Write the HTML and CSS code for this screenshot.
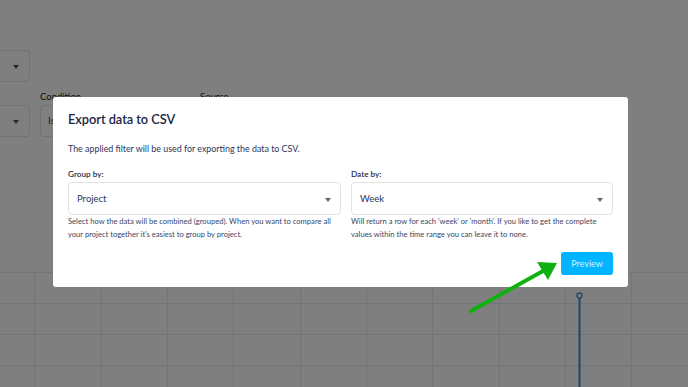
FILE: index.html
```html
<!DOCTYPE html>
<html lang="en">
<head>
    <meta charset="UTF-8">
    <title>Export data to CSV</title>
    <link rel="stylesheet" href="styles.css">
</head>
<body>

<div class="page">
    <div class="filters">
        <div class="filter-row">
            <div class="select small"><span class="caret"></span></div>
        </div>
        <div class="filter-row second">
            <div class="select small"><span class="caret"></span></div>
            <div class="field">
                <label>Condition</label>
                <div class="select cond"><span class="value">Is</span></div>
            </div>
            <div class="field">
                <label>Source</label>
                <div class="select cond"></div>
            </div>
        </div>
    </div>
    <svg class="chart" width="688" height="115" viewBox="0 0 688 115">
        <g stroke="#e8e8e8" stroke-width="1">
            <line x1="0" y1="0.5" x2="688" y2="0.5"/>
            <line x1="0" y1="31.5" x2="688" y2="31.5"/>
            <line x1="0" y1="62.5" x2="688" y2="62.5"/>
            <line x1="0" y1="93.5" x2="688" y2="93.5"/>
            <line x1="34.5" y1="0" x2="34.5" y2="115"/>
            <line x1="101.5" y1="0" x2="101.5" y2="115"/>
            <line x1="167.5" y1="0" x2="167.5" y2="115"/>
            <line x1="233.5" y1="0" x2="233.5" y2="115"/>
            <line x1="300.5" y1="0" x2="300.5" y2="115"/>
            <line x1="366.5" y1="0" x2="366.5" y2="115"/>
            <line x1="432.5" y1="0" x2="432.5" y2="115"/>
            <line x1="499.5" y1="0" x2="499.5" y2="115"/>
            <line x1="565.5" y1="0" x2="565.5" y2="115"/>
            <line x1="631.5" y1="0" x2="631.5" y2="115"/>
        </g>
        <line x1="579.5" y1="26" x2="579.5" y2="115" stroke="#3a8fd0" stroke-width="2"/>
        <circle cx="579.5" cy="23.5" r="2.5" fill="none" stroke="#3a8fd0" stroke-width="1.3"/>
    </svg>
</div>

<div class="overlay">
    <div class="modal">
        <h2 class="modal-title">Export data to CSV</h2>
        <p class="intro">The applied filter will be used for exporting the data to CSV.</p>
        <div class="columns">
            <div class="column">
                <label class="label">Group by:</label>
                <div class="dropdown">Project<span class="caret"></span></div>
                <p class="help">Select how the data will be combined (grouped). When you want to compare all your project together it's easiest to group by project.</p>
            </div>
            <div class="column">
                <label class="label">Date by:</label>
                <div class="dropdown">Week<span class="caret"></span></div>
                <p class="help">Will return a row for each 'week' or 'month'. If you like to get the complete values within the time range you can leave it to none.</p>
            </div>
        </div>
        <div class="actions">
            <button class="preview">Preview</button>
        </div>
    </div>
</div>

<svg class="pointer" width="688" height="387" viewBox="0 0 688 387">
    <line x1="471" y1="311" x2="543" y2="271" stroke="#0fb10f" stroke-width="4" stroke-linecap="round"/>
    <polygon points="557,263 537,262 548,280" fill="#0fb10f"/>
</svg>

</body>
</html>
```

FILE: styles.css
```css
body {
    margin: 0;
    font-family: Lato, "Open Sans", sans-serif;
    background: #fff;
    overflow: hidden;
}
.page {
    width: 688px;
    height: 387px;
}
.filters {
    padding-top: 50px;
    height: 222px;
    box-sizing: border-box;
}
.filter-row {
    display: flex;
    align-items: flex-end;
    gap: 10px;
}
.filter-row.second {
    margin-top: 9px;
}
.select {
    position: relative;
    height: 32px;
    border: 1px solid #e4e4e4;
    border-radius: 4px;
    box-sizing: border-box;
    background: #fff;
}
.select.small {
    width: 40px;
    margin-left: -10px;
}
.select.cond {
    width: 150px;
}
.select .value {
    display: block;
    padding: 8px 0 0 7px;
    font-size: 10px;
    color: #333;
}
.field label {
    display: block;
    font-size: 9.5px;
    color: #222;
    margin-bottom: 3px;
}
.caret {
    position: absolute;
    right: 10px;
    top: 14px;
    border-left: 3.5px solid transparent;
    border-right: 3.5px solid transparent;
    border-top: 4px solid #555;
}
.chart {
    display: block;
    margin-top: 50px;
}
.overlay {
    position: fixed;
    inset: 0;
    background: rgba(0, 0, 0, 0.5);
    padding-top: 97px;
}
.modal {
    width: 575px;
    height: 190px;
    margin-left: 53px;
    box-sizing: border-box;
    padding: 15px 15px 0 15px;
    background: #fff;
    border-radius: 3px;
    color: #2a3659;
}
.modal-title {
    margin: 0;
    font-size: 12.8px;
    font-weight: 600;
    color: #1a2444;
    line-height: 15px;
    letter-spacing: -0.05px;
}
.intro {
    margin: 14.5px 0 0;
    font-size: 8.9px;
    line-height: 13px;
}
.columns {
    display: flex;
    gap: 10px;
    margin-top: 13.5px;
}
.column {
    flex: 1;
}
.column:last-child {
    flex: 0 0 262px;
}
.label {
    display: block;
    font-size: 8.2px;
    font-weight: 600;
    color: #1f2a4c;
    line-height: 13px;
}
.dropdown {
    position: relative;
    margin-top: 0.5px;
    height: 33px;
    box-sizing: border-box;
    border: 1px solid #e2e2e2;
    border-radius: 4px;
    padding: 10px 0 0 8px;
    font-size: 9.5px;
    line-height: 11px;
    color: #2a3659;
}
.dropdown .caret {
    right: 9px;
    top: 15px;
    border-top-color: #666;
}
.help {
    margin: 0.5px 0 0;
    font-size: 7.6px;
    line-height: 13px;
    color: #3a4666;
}
.actions {
    display: flex;
    justify-content: flex-end;
    margin-top: 10.5px;
}
.preview {
    width: 52px;
    height: 23px;
    padding: 0;
    border: none;
    border-radius: 3px;
    background: #00b4ff;
    color: #d6f1ff;
    font-family: inherit;
    font-size: 9px;
    cursor: pointer;
}
.pointer {
    position: fixed;
    top: 0;
    left: 0;
}
```
